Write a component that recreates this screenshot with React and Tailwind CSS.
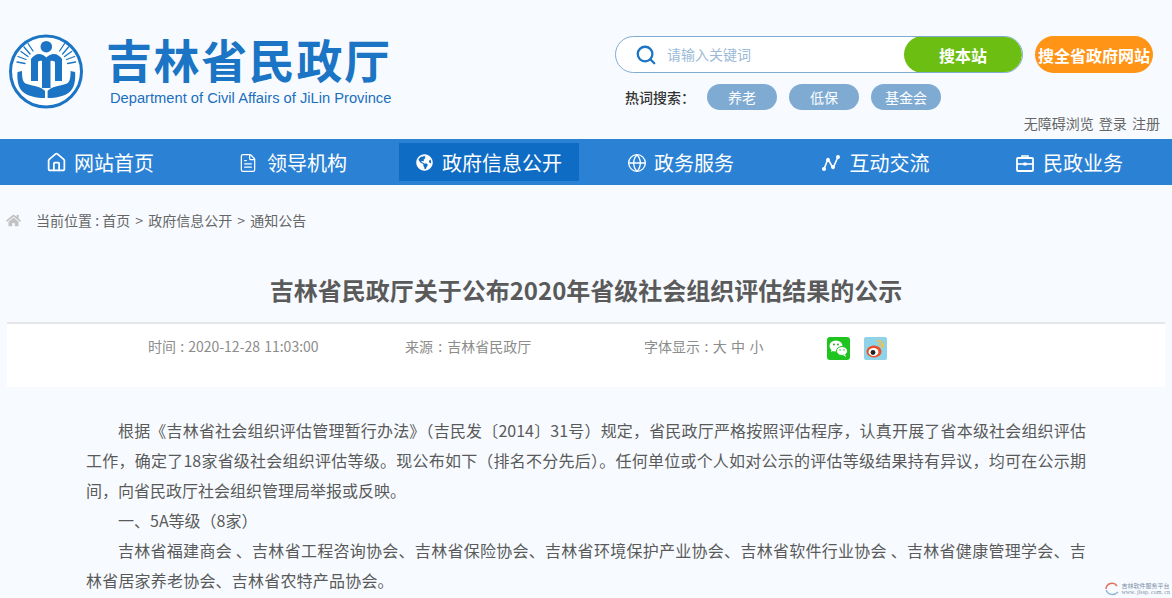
import React from "react";
import { Home, FileText, Globe, Search } from "lucide-react";
import { FaGlobeAmericas, FaHome } from "react-icons/fa";

const cjk = "font-['Noto_Sans_CJK_SC','Liberation_Sans',sans-serif]";

const Logo = () => (
  <svg width="76" height="76" viewBox="0 0 76 76" fill="none">
    <circle cx="38" cy="37.5" r="35.5" stroke="#1b75c4" strokeWidth="3" fill="#fff" />
    <circle cx="38.3" cy="12.7" r="5.8" fill="#1b75c4" />
    <path d="M23 47V25c2-3 5-5 8-5 3 0 5 1.500 7.300 3.500C40.600 21.500 43 20 46 20c3 0 6 2 8 5v22h-7V29c0-1.500-1.500-2.500-4.500-2v27h-8.500V27c-3-.5-4 .5-4 2v18z" fill="#1b75c4" />
    <path d="M9.500 38l4.500-1c0 8 1 12 5 13 7 2 15 3 18 7v7c-9 0-17-2-22-6-5-4-6-12-5.500-20z" fill="#1b75c4" />
    <path d="M67.100 38l-4.500-1c0 8-1 12-5 13-7 2-15 3-18 7v7c9 0 17-2 22-6 5-4 6-12 5.500-20z" fill="#1b75c4" />
    <g stroke="#1b75c4" strokeWidth="1.300" strokeLinecap="round">
      <path d="M9 28l8 1.500M10 22.500l8 3M13 17.500l7 5M16 13l6 7M20 9.500l5 7.500" />
      <path d="M67.600 28l-8 1.500M66.600 22.500l-8 3M63.600 17.500l-7 5M60.600 13l-6 7M56.600 9.500l-5 7.500" />
    </g>
  </svg>
);

const NodesIcon = () => (
  <svg width="20" height="20" viewBox="0 0 20 20" fill="none">
    <path d="M3 16L7 6l5 9 5-11" stroke="#fff" strokeWidth="1.600" />
    <circle cx="3" cy="16" r="2" fill="#fff" />
    <circle cx="7" cy="7" r="2" fill="#fff" />
    <circle cx="12" cy="14" r="2" fill="#fff" />
    <circle cx="17" cy="4" r="2" fill="#fff" />
  </svg>
);

const CaseIcon = () => (
  <svg width="18" height="18" viewBox="0 0 18 18" fill="none">
    <path d="M6 4V2h6v2" stroke="#fff" strokeWidth="1.600" />
    <rect x="1" y="4" width="16" height="13" rx="1" stroke="#fff" strokeWidth="1.800" />
    <path d="M1 10h16" stroke="#fff" strokeWidth="1.600" />
    <rect x="7.500" y="8.500" width="3" height="3" fill="#fff" />
  </svg>
);

const WechatIcon = () => (
  <svg width="23" height="23" viewBox="0 0 23 23">
    <rect width="23" height="23" rx="3" fill="#1fc41f" />
    <ellipse cx="9" cy="9" rx="6.500" ry="5.500" fill="#fff" />
    <path d="M5 12l-1 3 4-2z" fill="#fff" />
    <ellipse cx="15" cy="14" rx="5.500" ry="4.500" fill="#fff" stroke="#1fc41f" />
    <path d="M18 17l1 3-3-2z" fill="#fff" />
    <circle cx="7" cy="7.500" r="0.9" fill="#1fa01f" />
    <circle cx="11" cy="7.500" r="0.9" fill="#1fa01f" />
    <circle cx="13" cy="13" r="0.7" fill="#1fa01f" />
    <circle cx="17" cy="13" r="0.7" fill="#1fa01f" />
  </svg>
);

const WeiboIcon = () => (
  <svg width="23" height="23" viewBox="0 0 23 23">
    <rect width="23" height="23" rx="2" fill="#8fd3e8" />
    <ellipse cx="10" cy="14.500" rx="7.500" ry="6" fill="#e8502a" />
    <ellipse cx="9.500" cy="15" rx="5" ry="4" fill="#fff" />
    <circle cx="9" cy="15.500" r="2.400" fill="#222" />
    <path d="M13 4c4-1 7 2 6 7" stroke="#f5c04a" strokeWidth="1.800" fill="none" />
    <path d="M14 7c2-.5 3 1 2.600 3" stroke="#f5c04a" strokeWidth="1.400" fill="none" />
  </svg>
);

const navItems = [
  { label: "网站首页", icon: <Home size={21} strokeWidth={2} />, w: "w-[200px]", gap: "gap-[7px]" },
  { label: "领导机构", icon: <FileText size={20} strokeWidth={1.5} />, w: "w-[199px] pr-[14px]", gap: "gap-[9px]" },
  { label: "政府信息公开", icon: <FaGlobeAmericas size={17} />, w: "w-[180px] h-[38px] bg-[#0f6cc4]", gap: "gap-[9px]" },
  { label: "政务服务", icon: <Globe size={20} strokeWidth={1.6} />, w: "w-[194px] pl-[9px]", gap: "gap-[7px]" },
  { label: "互动交流", icon: <NodesIcon />, w: "w-[194px] pl-[10px]", gap: "gap-[9px]" },
  { label: "民政业务", icon: <CaseIcon />, w: "w-[198px] pl-[7px]", gap: "gap-[9px]" },
];

const hotWords = ["养老", "低保", "基金会"];

export default function App() {
  return (
    <div className={`relative h-[598px] overflow-hidden bg-[#f7fbff] ${cjk}`}>
      {/* header */}
      <header className="flex h-[139px] justify-between pl-[8px] pr-[11px]">
        <div className="flex pt-[34px]">
          <Logo />
          <div className="ml-[22px] flex flex-col">
            <div className="-mt-[1px] h-[50px] text-[46px] font-bold leading-[50px] tracking-[1.6px] text-[#1b75c4]">吉林省民政厅</div>
            <div className="mt-[6px] pl-[4px] font-['Liberation_Sans',sans-serif] text-[14.7px] leading-[18px] text-[#1b6fbd]">
              Department of Civil Affairs of JiLin Province
            </div>
          </div>
        </div>
        <div className="flex w-[546px] flex-col pt-[36px]">
          <div className="flex items-center">
            <div className="flex h-[37px] w-[408px] overflow-hidden rounded-full border border-[#7fabd3] bg-white">
              <div className="flex flex-1 items-center pl-[19px]">
                <Search size={22} strokeWidth={2.5} className="text-[#1b75c4]" />
                <span className="ml-[10px] text-[14px] text-[#9cbad8]">请输入关键词</span>
              </div>
              <div className="-my-px flex w-[118px] items-center justify-center rounded-full bg-[#6cbf12] text-[16px] font-bold text-white">
                搜本站
              </div>
            </div>
            <div className="ml-[12px] flex h-[37px] w-[118px] items-center justify-center rounded-full bg-[#ff9417] text-[16px] font-bold text-white">
              搜全省政府网站
            </div>
          </div>
          <div className="mt-[11px] flex items-center gap-[12px] pl-[10px]">
            <span className="-mr-[12px] w-[82px] text-[14px] font-medium text-[#333]">热词搜索：</span>
            {hotWords.map((w) => (
              <span key={w} className="flex h-[26px] w-[70px] items-center justify-center rounded-full bg-[#7fabd3] text-[14px] text-white">
                {w}
              </span>
            ))}
          </div>
          <div className="mt-[3px] pr-[1px] text-right text-[14px] leading-[20px] text-[#666] [word-spacing:2px]">无障碍浏览 登录 注册</div>
        </div>
      </header>

      {/* nav */}
      <nav className="flex h-[46px] items-center bg-[#2b82d5] text-white">
        {navItems.map((item) => (
          <div key={item.label} className={`flex items-center justify-center pt-[1px] text-[20px] ${item.gap} ${item.w}`}>
            {item.icon}
            <span>{item.label}</span>
          </div>
        ))}
      </nav>

      {/* breadcrumb */}
      <div className="flex h-[70px] items-center pl-[6px] text-[14px] text-[#666]">
        <FaHome size={15} className="text-[#c2c2c2]" />
        <span className="ml-[15px]">
          当前位置 : 首页<span className="mx-[2px]"> &gt; </span>政府信息公开<span className="mx-[2px]"> &gt; </span>通知公告
        </span>
      </div>

      {/* title */}
      <h1 className="pt-[17px] text-center text-[24px] font-bold leading-[36px] text-[#5a5a5a]">
        吉林省民政厅关于公布2020年省级社会组织评估结果的公示
      </h1>

      {/* meta */}
      <div className="mx-[7px] mt-[14px] flex h-[65px] border-t-2 border-[#e4e6ea] bg-white pt-[12px] text-[14px] leading-[20px] text-[#8c8c8c]">
        <span className="ml-[141px] w-[257px] [word-spacing:1px]">时间 : 2020-12-28 11:03:00</span>
        <span className="w-[239px] [word-spacing:2px]">来源 : 吉林省民政厅</span>
        <span className="w-[183px] [word-spacing:1.25px]">字体显示 : 大 中 小</span>
        <div className="mt-[1px] flex gap-[14px]">
          <WechatIcon />
          <WeiboIcon />
        </div>
      </div>

      {/* body */}
      <article className="mx-[86px] mt-[28px] w-[1000px] text-justify text-[16px] leading-[30px] text-[#5a5a5a]">
        <p className="indent-[32px]">
          根据《吉林省社会组织评估管理暂行办法》（吉民发〔2014〕31号）规定，省民政厅严格按照评估程序，认真开展了省本级社会组织评估工作，确定了18家省级社会组织评估等级。现公布如下（排名不分先后）。任何单位或个人如对公示的评估等级结果持有异议，均可在公示期间，向省民政厅社会组织管理局举报或反映。
        </p>
        <p className="indent-[32px]">一、5A等级（8家）</p>
        <p className="indent-[32px] tracking-[0.2px]">
          吉林省福建商会 、吉林省工程咨询协会、吉林省保险协会、吉林省环境保护产业协会、吉林省软件行业协会 、吉林省健康管理学会、吉林省居家养老协会、吉林省农特产品协会。
        </p>
      </article>

      {/* watermark */}
      <div className="absolute bottom-[2px] right-[2px] flex items-center gap-[2px] text-[6px] leading-[7px] text-[#7c8fa8]">
        <svg width="14" height="14" viewBox="0 0 14 14" fill="none">
          <path d="M1 7a6 6 0 0 1 11-3" stroke="#e0705a" strokeWidth="1.500" />
          <path d="M1 8c2 5 8 6 12 2" stroke="#8fb6d8" strokeWidth="1.500" />
        </svg>
        <div>
          <div>吉林软件服务平台</div>
          <div className="font-['Liberation_Serif',serif]">www. jlssp. com. cn</div>
        </div>
      </div>
    </div>
  );
}
